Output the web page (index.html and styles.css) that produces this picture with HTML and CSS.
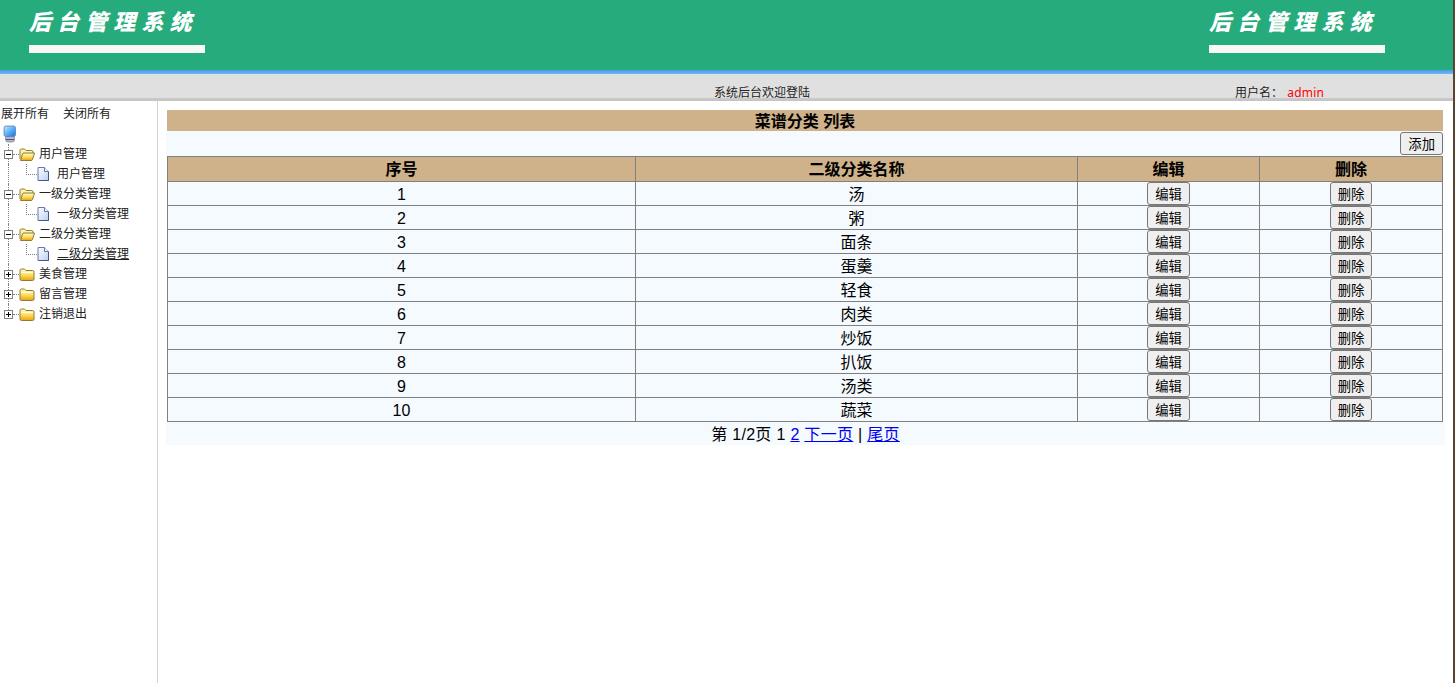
FILE: index.html
```html
<!DOCTYPE html>
<html>
  <head>
    <meta charset="utf-8" />
    <title>后台管理系统</title>
    <link rel="stylesheet" href="styles.css">
  </head>
  <body>
    <svg class="defs" width="0" height="0">
      <defs>
        <linearGradient id="folder-fill" x1="0" y1="0" x2="0" y2="1">
          <stop offset="0" stop-color="#fffbd0"/>
          <stop offset=".5" stop-color="#fde05e"/>
          <stop offset="1" stop-color="#e9a212"/>
        </linearGradient>
        <linearGradient id="page-fill" x1="0" y1="0" x2="1" y2="1">
          <stop offset="0" stop-color="#ffffff"/>
          <stop offset="1" stop-color="#bcd0f2"/>
        </linearGradient>
        <linearGradient id="screen-fill" x1="0" y1="0" x2="1" y2="1">
          <stop offset="0" stop-color="#c4ecff"/>
          <stop offset=".6" stop-color="#4aa6f4"/>
          <stop offset="1" stop-color="#1c6fe0"/>
        </linearGradient>
        <symbol id="folder-open" viewBox="0 0 16 13">
          <path d="M1 11V2.5Q1 1 2.5 1H5.5L7 2.5H12.5Q14 2.5 14 4V5.5" fill="#fff3a8" stroke="#8c7a3c"/>
          <path d="M1.5 12.5L3.5 6Q3.8 5 5 5H15.5L13.5 11.5Q13.2 12.5 12 12.5Z" fill="url(#folder-fill)" stroke="#8c7a3c"/>
        </symbol>
        <symbol id="folder-shut" viewBox="0 0 16 13">
          <path d="M1 2.5Q1 1 2.5 1H5.5L7 2.5H13.5Q15 2.5 15 4V11Q15 12.5 13.5 12.5H2.5Q1 12.5 1 11Z" fill="url(#folder-fill)" stroke="#8c7a3c"/>
          <path d="M2 4.5H14" stroke="#fffbd8"/>
        </symbol>
        <symbol id="page" viewBox="0 0 12 14">
          <path d="M1 .5H7.5L11.5 4.5V13.5H1Z" fill="url(#page-fill)" stroke="#6478b4"/>
          <path d="M7.5 .5V4.5H11.5" fill="#fff" stroke="#6478b4"/>
          <path d="M11.5 5V13.5H1.5" fill="none" stroke="#46568e"/>
        </symbol>
        <symbol id="minus" viewBox="0 0 9 9">
          <rect x=".5" y=".5" width="8" height="8" fill="#fff" stroke="#808080"/>
          <path d="M2 4.5H7" stroke="#000"/>
        </symbol>
        <symbol id="plus" viewBox="0 0 9 9">
          <rect x=".5" y=".5" width="8" height="8" fill="#fff" stroke="#808080"/>
          <path d="M2 4.5H7M4.5 2V7" stroke="#000"/>
        </symbol>
      </defs>
    </svg>

    <div class="top">
      <div class="logo">
        <div class="logo-text">后台管理系统</div>
        <div class="logo-bar"></div>
      </div>
      <div class="logo">
        <div class="logo-text">后台管理系统</div>
        <div class="logo-bar"></div>
      </div>
    </div>
    <div class="status">
      <span class="welcome">系统后台欢迎登陆</span>
      <span class="user">用户名： <span class="user-name">admin</span></span>
    </div>

    <div class="frame">
      <div class="side">
        <div class="side-links"><a>展开所有</a><a>关闭所有</a></div>
        <div class="tree-root">
          <svg width="14" height="18" viewBox="0 0 14 18">
            <rect x="2.5" y="10.5" width="9" height="6.5" rx="2.5" fill="#b4b8cc" stroke="#74788e" stroke-width=".7"/>
            <path d="M3 14.5H11" stroke="#54586e"/>
            <rect x="1" y="1" width="11.5" height="10.5" rx="2" fill="url(#screen-fill)" stroke="#5f7cb4" stroke-width=".8"/>
          </svg>
        </div>
        <div class="tree">
          <div class="tree-row">
            <span class="dots"></span><svg class="toggle"><use href="#minus"/></svg><span class="link"></span>
            <svg class="folder"><use href="#folder-open"/></svg><span class="label">用户管理</span>
          </div>
          <div class="tree-row child">
            <span class="dots"></span><span class="elbow"></span>
            <svg class="doc"><use href="#page"/></svg><span class="label">用户管理</span>
          </div>
          <div class="tree-row">
            <span class="dots"></span><svg class="toggle"><use href="#minus"/></svg><span class="link"></span>
            <svg class="folder"><use href="#folder-open"/></svg><span class="label">一级分类管理</span>
          </div>
          <div class="tree-row child">
            <span class="dots"></span><span class="elbow"></span>
            <svg class="doc"><use href="#page"/></svg><span class="label">一级分类管理</span>
          </div>
          <div class="tree-row">
            <span class="dots"></span><svg class="toggle"><use href="#minus"/></svg><span class="link"></span>
            <svg class="folder"><use href="#folder-open"/></svg><span class="label">二级分类管理</span>
          </div>
          <div class="tree-row child">
            <span class="dots"></span><span class="elbow"></span>
            <svg class="doc"><use href="#page"/></svg><span class="label current">二级分类管理</span>
          </div>
          <div class="tree-row">
            <span class="dots"></span><svg class="toggle"><use href="#plus"/></svg><span class="link"></span>
            <svg class="folder"><use href="#folder-shut"/></svg><span class="label">美食管理</span>
          </div>
          <div class="tree-row">
            <span class="dots"></span><svg class="toggle"><use href="#plus"/></svg><span class="link"></span>
            <svg class="folder"><use href="#folder-shut"/></svg><span class="label">留言管理</span>
          </div>
          <div class="tree-row last">
            <span class="dots"></span><svg class="toggle"><use href="#plus"/></svg><span class="link"></span>
            <svg class="folder"><use href="#folder-shut"/></svg><span class="label">注销退出</span>
          </div>
        </div>
      </div>

      <div class="main">
        <div class="title">菜谱分类 列表</div>
        <div class="tools"><button>添加</button></div>
        <table>
          <tr>
            <th class="col-no">序号</th>
            <th class="col-name">二级分类名称</th>
            <th class="col-edit">编辑</th>
            <th>删除</th>
          </tr>
          <tr><td>1</td><td>汤</td><td><button>编辑</button></td><td><button>删除</button></td></tr>
          <tr><td>2</td><td>粥</td><td><button>编辑</button></td><td><button>删除</button></td></tr>
          <tr><td>3</td><td>面条</td><td><button>编辑</button></td><td><button>删除</button></td></tr>
          <tr><td>4</td><td>蛋羹</td><td><button>编辑</button></td><td><button>删除</button></td></tr>
          <tr><td>5</td><td>轻食</td><td><button>编辑</button></td><td><button>删除</button></td></tr>
          <tr><td>6</td><td>肉类</td><td><button>编辑</button></td><td><button>删除</button></td></tr>
          <tr><td>7</td><td>炒饭</td><td><button>编辑</button></td><td><button>删除</button></td></tr>
          <tr><td>8</td><td>扒饭</td><td><button>编辑</button></td><td><button>删除</button></td></tr>
          <tr><td>9</td><td>汤类</td><td><button>编辑</button></td><td><button>删除</button></td></tr>
          <tr><td>10</td><td>蔬菜</td><td><button>编辑</button></td><td><button>删除</button></td></tr>
        </table>
        <div class="pager">第 1/2页 1 <a href="#">2</a> <a href="#">下一页</a> | <a href="#">尾页</a></div>
      </div>
    </div>
  </body>
</html>
```

FILE: styles.css
```css
* {
  box-sizing: border-box;
}
html,
body {
  height: 100%;
}
body {
  margin: 0;
  display: flex;
  flex-direction: column;
  overflow: hidden;
  font-family: "Liberation Sans", "Noto Sans CJK SC", sans-serif;
  color: #000;
  background-color: #ffffff;
  border-right: 2px solid #5a4535;
}
.defs {
  position: absolute;
}

/* top banner */
.top {
  height: 70px;
  flex: none;
  display: flex;
  justify-content: space-between;
  padding: 6px 68px 0 29px;
  background-color: #26ab7c;
}
.logo {
  width: 176px;
}
.logo-text {
  height: 29px;
  font-family: "Noto Sans CJK SC", sans-serif;
  font-size: 22px;
  line-height: 29px;
  font-weight: 900;
  font-style: italic;
  letter-spacing: 6.1px;
  white-space: nowrap;
  color: #ffffff;
}
.logo-bar {
  height: 8px;
  margin-top: 10px;
  background-color: #f8f8f8;
}

/* status bar */
.status {
  height: 31px;
  flex: none;
  position: relative;
  font-size: 12px;
  color: #222;
  background: linear-gradient(#4c9ce8, #70b6f8) top / 100% 4px no-repeat #e0e0e0;
  border-bottom: 1px solid #c4c4c4;
  box-shadow: inset 0 -2px 0 #c8c8c8, inset 0 -1px 0 #f4f4f4;
}
.welcome {
  position: absolute;
  left: 714px;
  top: 13px;
}
.user {
  position: absolute;
  left: 1235px;
  top: 13px;
}
.user-name {
  margin-left: 1px;
  color: #ff0000;
  font-family: "Noto Sans", sans-serif;
  font-size: 12px;
  letter-spacing: .2px;
}

.frame {
  flex: 1;
  display: flex;
  min-height: 0;
}

/* left tree */
.side {
  width: 158px;
  flex: none;
  border-right: 1px solid #d4d4d4;
  font-size: 12px;
  color: #222;
}
.side-links {
  height: 24px;
  padding: 6px 0 0 1px;
  line-height: 14px;
}
.side-links a {
  margin-right: 14px;
}
.tree-root {
  height: 19px;
  padding-left: 3px;
}
.tree-root svg {
  display: block;
}
.tree-row {
  height: 20px;
  display: flex;
  align-items: center;
  position: relative;
  padding-left: 4px;
}
.dots {
  position: absolute;
  left: 8px;
  top: 0;
  bottom: 0;
  border-left: 1px dotted #808080;
}
.last .dots {
  bottom: 10px;
}
.toggle {
  width: 9px;
  height: 9px;
  position: relative;
}
.link {
  width: 6px;
  border-top: 1px dotted #808080;
}
.folder {
  width: 16px;
  height: 13px;
  margin-right: 4px;
}
.child {
  padding-left: 26px;
}
.elbow {
  width: 11px;
  height: 11px;
  margin-top: -10px;
  border-left: 1px dotted #808080;
  border-bottom: 1px dotted #808080;
}
.doc {
  width: 12px;
  height: 14px;
  margin-right: 8px;
}
.label {
  line-height: 16px;
}
.current {
  text-decoration: underline;
}

/* list */
.main {
  flex: 1;
  padding: 9px 8px 0 8px;
}
.title {
  height: 21px;
  margin: 0 2px 0 1px;
  text-align: center;
  font-size: 16px;
  line-height: 23px;
  font-weight: 700;
  background-color: #d0b28a;
}
.tools {
  height: 25px;
  display: flex;
  justify-content: flex-end;
  align-items: center;
  padding-right: 2px;
  background-color: #f5faff;
}
button {
  height: 23px;
  padding: 0 7px;
  font-family: inherit;
  font-size: 13.33px;
  color: #000;
  background-color: #efefef;
  border: 1px solid #767676;
  border-radius: 3px;
}
table {
  width: 1276px;
  margin-left: 1px;
  table-layout: fixed;
  border-collapse: collapse;
  font-size: 16px;
  line-height: 21px;
  background-color: #f5faff;
}
th,
td {
  padding: 2px 0 0;
  text-align: center;
  border: 1px solid #808080;
}
td:nth-child(n+3) {
  padding-top: 0;
}
td button {
  display: block;
  margin: 0 auto;
}
th {
  height: 25px;
  padding-top: 1px;
  line-height: 22px;
  background-color: #d0b28a;
}
.col-no {
  width: 468px;
}
.col-name {
  width: 442px;
}
.col-edit {
  width: 182px;
}
.pager {
  height: 23px;
  text-align: center;
  font-size: 16px;
  line-height: 26px;
  letter-spacing: .3px;
  background-color: #f5faff;
}
.pager a {
  color: #0000ee;
}
```
